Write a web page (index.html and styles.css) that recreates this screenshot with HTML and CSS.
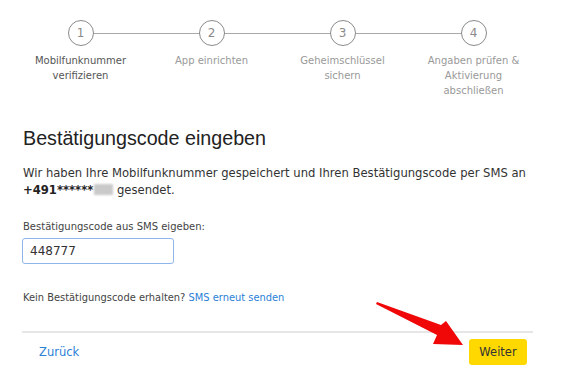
FILE: index.html
```html
<!DOCTYPE html>
<html lang="de">
<head>
    <meta charset="UTF-8">
    <title>Bestätigungscode eingeben</title>
    <link rel="stylesheet" href="styles.css">
</head>
<body>

    <!-- Step indicator -->
    <ol class="steps">
        <li class="step active">
            <span class="circle">1</span>
            <span class="label">Mobilfunknummer verifizieren</span>
        </li>
        <li class="step">
            <span class="circle">2</span>
            <span class="label">App einrichten</span>
        </li>
        <li class="step">
            <span class="circle">3</span>
            <span class="label">Geheimschlüssel sichern</span>
        </li>
        <li class="step">
            <span class="circle">4</span>
            <span class="label">Angaben prüfen &amp; Aktivierung abschließen</span>
        </li>
    </ol>

    <div class="content">
        <h1>Bestätigungscode eingeben</h1>
        <p class="intro">Wir haben Ihre Mobilfunknummer gespeichert und Ihren Bestätigungscode per SMS an <b>+491******</b><span class="blur"></span> gesendet.</p>

        <label class="field-label" for="code">Bestätigungscode aus SMS eigeben:</label>
        <input class="code-input" id="code" type="text" value="448777">

        <p class="resend">Kein Bestätigungscode erhalten? <a href="#">SMS erneut senden</a></p>

        <div class="footer">
            <a href="#" class="back">Zurück</a>
            <button class="next">Weiter</button>
        </div>
    </div>

    <!-- annotation arrow -->
    <svg class="arrow" width="573" height="377" viewBox="0 0 573 377">
        <polygon points="377,302 441,325 446,321 463,345 433,344 437,335 376,304" fill="#f00708"/>
    </svg>

</body>
</html>
```

FILE: styles.css
```css
/* General */
body {
    margin: 0;
    width: 573px;
    height: 377px;
    font-family: "DejaVu Sans", Verdana, sans-serif;
    color: #333;
    background: #fff;
    position: relative;
    overflow: hidden;
}

/* Steps */
.steps {
    list-style: none;
    margin: 0;
    padding: 20px 0 0 15px;
    display: grid;
    grid-template-columns: repeat(4, 131px);
}

.step {
    position: relative;
    display: flex;
    flex-direction: column;
    align-items: center;
    text-align: center;
}

.step + .step::before {
    content: "";
    position: absolute;
    top: 13px;
    left: -50%;
    width: 100%;
    height: 1px;
    background: #a9a9a9;
}

.circle {
    position: relative;
    z-index: 1;
    width: 24px;
    height: 24px;
    border: 1px solid #8a8a8a;
    border-radius: 50%;
    background: #fff;
    font-size: 12px;
    line-height: 24px;
    color: #8a8a8a;
}

.label {
    margin-top: 7px;
    padding: 0 14px;
    font-size: 10px;
    line-height: 15px;
    color: #999;
}

.step.active .label {
    color: #555;
}

/* Content */
.content {
    padding: 0 40px 0 22px;
}

h1 {
    margin: 28px 0 0 1px;
    font-family: "Liberation Sans", Arial, sans-serif;
    font-size: 19.7px;
    font-weight: normal;
    line-height: 24px;
    color: #222;
}

.intro {
    margin: 15px -4px 0 1px;
    font-size: 11.6px;
    line-height: 17px;
    color: #333;
}

.intro b {
    color: #222;
}

.blur {
    display: inline-block;
    width: 19px;
    height: 11px;
    margin-left: 1px;
    vertical-align: -1px;
    background: #c9c9c9;
    filter: blur(1px);
}

.field-label {
    display: block;
    margin: 21px 0 0 1px;
    font-size: 10px;
    line-height: 14px;
    color: #444;
}

.code-input {
    display: block;
    box-sizing: border-box;
    width: 152px;
    height: 26px;
    margin-top: 4px;
    padding: 0 7px;
    border: 1px solid #8fb6ea;
    border-radius: 3px;
    font-family: "DejaVu Sans", Verdana, sans-serif;
    font-size: 12px;
    color: #333;
    outline: none;
}

.resend {
    margin: 27px 0 0 1px;
    font-size: 9.9px;
    line-height: 14px;
    color: #444;
}

a {
    color: #2b7fd6;
    text-decoration: none;
}

/* Footer */
.footer {
    margin-top: 26px;
    border-top: 2px solid #e6e6e6;
    display: flex;
    justify-content: space-between;
    align-items: center;
    padding: 6px 6px 0 17px;
}

.back {
    font-size: 11.5px;
}

.next {
    width: 58px;
    height: 26px;
    border: 0;
    border-radius: 3px;
    background: #ffd800;
    font-family: "DejaVu Sans", Verdana, sans-serif;
    font-size: 11.5px;
    color: #333;
}

/* Annotation */
.arrow {
    position: absolute;
    left: 0;
    top: 0;
    pointer-events: none;
}
```
